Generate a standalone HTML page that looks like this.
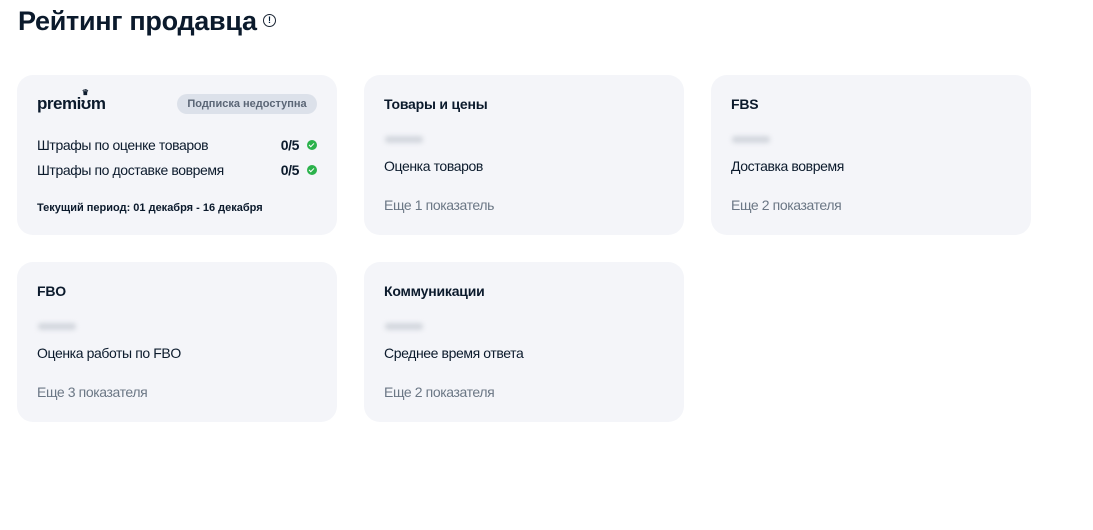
<!DOCTYPE html>
<html><head><meta charset="utf-8"><style>
*{box-sizing:border-box;margin:0;padding:0}
body{width:1093px;height:530px;background:#fff;font-family:"Liberation Sans",Arial,sans-serif;color:#001a34;position:relative;overflow:hidden}
h1{position:absolute;left:18px;top:6px;font-size:27px;font-weight:bold;letter-spacing:-0.3px;color:#0b1a2c}
.info{position:absolute;left:263px;top:14px;width:13px;height:13px;border:1.5px solid #1a2433;border-radius:50%;font-size:9px;font-weight:bold;text-align:center;line-height:10px}
.card{position:absolute;width:320px;height:160px;background:#f4f5f9;border-radius:16px}
.t{position:absolute;left:20px;top:21px;font-size:14px;font-weight:bold;color:#0b1a2c;letter-spacing:-0.2px}
.blur{position:absolute;left:21px;top:61px;width:38px;height:7px;background:#d3d7de;filter:blur(2.5px);border-radius:3px}
.l{position:absolute;left:20px;top:83px;font-size:14px;color:#0b1a2c;letter-spacing:-0.4px}
.m{position:absolute;left:20px;top:122px;font-size:14px;color:#6b7785;letter-spacing:-0.4px}
.row{position:absolute;left:20px;right:20px;font-size:14px;color:#0b1a2c;letter-spacing:-0.4px}
.row b{position:absolute;right:18px;top:0}
.ok{position:absolute;right:0;top:3px;width:10px;height:10px;border-radius:50%;background:#2bb24c}
.ok:after{content:"";position:absolute;left:3px;top:2px;width:2px;height:4px;border:solid #fff;border-width:0 1.5px 1.5px 0;transform:rotate(45deg)}
</style></head><body>
<h1>Рейтинг продавца</h1><div class="info">!</div>

<div class="card" style="left:17px;top:75px">
  <div style="position:absolute;left:20px;top:19px;font-size:17px;font-weight:bold;color:#0b1a2c;letter-spacing:-0.5px">premi<span style="position:relative">ʊ<span style="position:absolute;left:1px;top:-6px;font-size:8px">♛</span></span>m</div>
  <div style="position:absolute;left:160px;top:19px;width:140px;height:20px;border-radius:10px;background:#dce1ea;font-size:11px;font-weight:bold;color:#5b6676;text-align:center;line-height:20px">Подписка недоступна</div>
  <div class="row" style="top:62px">Штрафы по оценке товаров<b>0/5</b><span class="ok"></span></div>
  <div class="row" style="top:87px">Штрафы по доставке вовремя<b>0/5</b><span class="ok"></span></div>
  <div style="position:absolute;left:20px;top:127px;font-size:11px;font-weight:bold;color:#0b1a2c">Текущий период: 01 декабря - 16 декабря</div>
</div>

<div class="card" style="left:364px;top:75px"><div class="t">Товары и цены</div><div class="blur"></div><div class="l">Оценка товаров</div><div class="m">Еще 1 показатель</div></div>
<div class="card" style="left:711px;top:75px"><div class="t">FBS</div><div class="blur"></div><div class="l">Доставка вовремя</div><div class="m">Еще 2 показателя</div></div>
<div class="card" style="left:17px;top:262px"><div class="t">FBO</div><div class="blur"></div><div class="l">Оценка работы по FBO</div><div class="m">Еще 3 показателя</div></div>
<div class="card" style="left:364px;top:262px"><div class="t">Коммуникации</div><div class="blur"></div><div class="l">Среднее время ответа</div><div class="m">Еще 2 показателя</div></div>
</body></html>
